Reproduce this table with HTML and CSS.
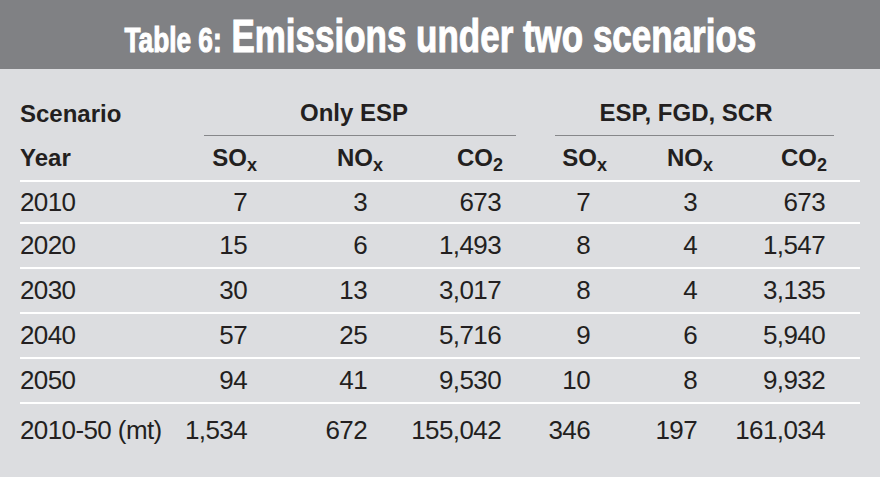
FILE: index.html
```html
<!DOCTYPE html>
<html lang="en">
<head>
    <meta charset="UTF-8">
    <title>Table 6: Emissions under two scenarios</title>
    <meta name="viewport" content="width=device-width, initial-scale=1.0">
    <link rel="stylesheet" href="styles.css">
</head>
<body>
    <header class="banner">
        <span class="banner-text"><span class="banner-label">Table 6:</span> <span class="banner-title">Emissions under two scenarios</span></span>
    </header>

    <table class="emissions">
        <colgroup>
            <col class="c-label">
            <col class="c-so">
            <col class="c-no">
            <col class="c-co">
            <col class="c-so2">
            <col class="c-no2">
            <col class="c-co2">
            <col class="c-tail">
        </colgroup>
        <thead>
            <tr class="group-row">
                <th class="label">Scenario</th>
                <th colspan="3" class="group"><div class="group-rule rule-esp">Only ESP</div></th>
                <th colspan="4" class="group"><div class="group-rule rule-full">ESP, FGD, SCR</div></th>
            </tr>
            <tr class="year-row">
                <th class="label">Year</th>
                <th>SO<sub>x</sub></th>
                <th>NO<sub>x</sub></th>
                <th>CO<sub>2</sub></th>
                <th>SO<sub>x</sub></th>
                <th>NO<sub>x</sub></th>
                <th>CO<sub>2</sub></th>
                <th></th>
            </tr>
        </thead>
        <tbody>
            <tr class="first">
                <td>2010</td><td>7</td><td>3</td><td>673</td><td>7</td><td>3</td><td>673</td><td></td>
            </tr>
            <tr>
                <td>2020</td><td>15</td><td>6</td><td>1,493</td><td>8</td><td>4</td><td>1,547</td><td></td>
            </tr>
            <tr>
                <td>2030</td><td>30</td><td>13</td><td>3,017</td><td>8</td><td>4</td><td>3,135</td><td></td>
            </tr>
            <tr>
                <td>2040</td><td>57</td><td>25</td><td>5,716</td><td>9</td><td>6</td><td>5,940</td><td></td>
            </tr>
            <tr>
                <td>2050</td><td>94</td><td>41</td><td>9,530</td><td>10</td><td>8</td><td>9,932</td><td></td>
            </tr>
            <tr class="total">
                <td>2010-50 (mt)</td><td>1,534</td><td>672</td><td>155,042</td><td>346</td><td>197</td><td>161,034</td><td></td>
            </tr>
        </tbody>
    </table>
</body>
</html>
```

FILE: styles.css
```css
:root {
    --band-color: #808184;
    --page-color: #dcdde0;
    --text-color: #231f20;
    --rule-color: #86878a;
}

html {
    background: #fff;
}

body {
    margin: 0;
    width: 880px;
    min-height: 477px;
    background: var(--page-color);
    color: var(--text-color);
    font-family: "Liberation Sans", Arial, sans-serif;
}

/* title band */
.banner {
    display: block;
    height: 69px;
    box-sizing: border-box;
    padding-top: 3px;
    background: var(--band-color);
    color: #fff;
    text-align: center;
    font-size: 44px;
    line-height: 66px;
    font-weight: bold;
    overflow: hidden;
}

.banner-text {
    display: inline-block;
    transform: scale(0.795, 1.04);
    white-space: nowrap;
    -webkit-text-stroke: 1px #fff;
}

.banner-label {
    font-size: 33px;
}

.banner-title {
    font-size: 44px;
}

/* table */
.emissions {
    margin: 22px 0 0 20px;
    width: 840px;
    table-layout: fixed;
    border-collapse: separate;
    border-spacing: 0;
    font-size: 26px;
    letter-spacing: -0.6px;
}

.c-label { width: 151px; }
.c-so    { width: 86px; }
.c-no    { width: 126px; }
.c-co    { width: 120px; }
.c-so2   { width: 104px; }
.c-no2   { width: 106px; }
.c-co2   { width: 114px; }
.c-tail  { width: 33px; }

th, td {
    padding: 0;
    text-align: right;
    white-space: nowrap;
}

th {
    font-size: 24px;
    font-weight: bold;
    letter-spacing: 0;
}

th.label,
td:first-child {
    text-align: left;
}

sub {
    font-size: 18px;
    vertical-align: -5px;
    line-height: 0;
}

.group-row th {
    line-height: 44px;
}

.group {
    text-align: center;
}

.group-rule {
    border-bottom: 1px solid var(--rule-color);
}

.rule-esp {
    margin: 0 -13px 0 33px;
    padding-right: 12px;
}

.rule-full {
    margin: 0 26px 0 52px;
    padding-right: 17px;
}

.year-row th {
    line-height: 44px;
    border-bottom: 2px solid #fff;
}

td {
    line-height: 43px;
    border-bottom: 2px solid #fff;
}

.first td {
    line-height: 40px;
}

.total td {
    line-height: 52px;
    border-bottom: none;
}

/* numbers sit a little left of the header edge */
td:nth-child(2) { padding-right: 10px; }
td:nth-child(3) { padding-right: 16px; }
td:nth-child(4) { padding-right: 2px; }
td:nth-child(5) { padding-right: 17px; }
td:nth-child(6) { padding-right: 16px; }
td:nth-child(7) { padding-right: 2px; }
```
